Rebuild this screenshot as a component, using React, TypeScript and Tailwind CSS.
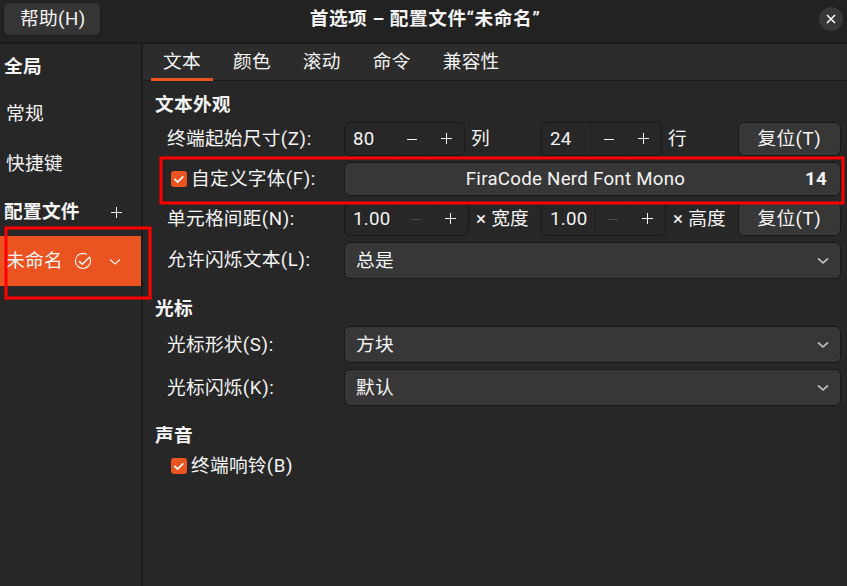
import type { ReactNode } from 'react';

const tabs = ['文本', '颜色', '滚动', '命令', '兼容性'];

function Chevron({ className }: { className: string }) {
  return (
    <svg className={className} width="12" height="8" viewBox="0 0 12 8" fill="none" stroke="currentColor">
      <path d="M1 1.5 L6 5.9 L11 1.5" />
    </svg>
  );
}

function Plus() {
  return (
    <svg width="12" height="12" viewBox="0 0 12 12" stroke="currentColor" strokeWidth="1" shapeRendering="crispEdges">
      <path d="M0.5 6.5H11.5M6.5 1V12" />
    </svg>
  );
}

function Minus() {
  return (
    <svg width="11" height="12" viewBox="0 0 11 12" stroke="currentColor" strokeWidth="1" shapeRendering="crispEdges">
      <path d="M0.5 6.5H10.5" />
    </svg>
  );
}

function Check() {
  return (
    <span className="flex h-4 w-4 shrink-0 items-center justify-center rounded-[3px] bg-[#e95420]">
      <svg width="16" height="16" viewBox="0 0 16 16" fill="none" stroke="#fff" strokeWidth="1.7">
        <path d="M3.4 7.9 L6.6 11 L12.3 5.3" />
      </svg>
    </span>
  );
}

function Key({ children }: { children: ReactNode }) {
  return <span className="tracking-[0.6px]">{children}</span>;
}

function Spin({ value, wide, atMin }: { value: string; wide?: boolean; atMin?: boolean }) {
  return (
    <div className={`flex h-[34px] shrink-0 rounded-[6px] border border-[#191919] bg-[#272727] ${wide ? 'w-[125px]' : 'w-[121px]'}`}>
      <span className="flex flex-1 items-center pl-2">{value}</span>
      <span className={`flex w-[35px] items-center justify-center border-l border-[#222] pr-0.5 ${atMin ? 'text-[#4b4b4b]' : ''}`}><Minus /></span>
      <span className="flex w-[35px] items-center justify-center border-l border-[#222] pb-0.5 pr-0.5"><Plus /></span>
    </div>
  );
}

function Reset() {
  return (
    <button className="ml-auto flex h-[34px] w-[103px] items-center justify-center rounded-[6px] border border-[#191919] bg-[#373737]">
      <span>复位<Key>(T)</Key></span>
    </button>
  );
}

function Combo({ children }: { children: ReactNode }) {
  return (
    <div className="flex h-[37px] flex-1 items-center justify-between rounded-[6px] border border-[#191919] bg-[#373737] pl-[11px] pr-[11px]">
      <span className="pt-px">{children}</span>
      <Chevron className="mt-px text-[#b8b8b8] [stroke-width:1.8]" />
    </div>
  );
}

function Row({ label, children, className }: { label: ReactNode; children?: ReactNode; className: string }) {
  return (
    <div className={`flex items-center pr-[6px] ${className}`}>
      <div className="flex w-[201px] shrink-0 items-center pl-6">{label}</div>
      {children}
    </div>
  );
}

export default function App() {
  return (
    <div className="relative flex h-[586px] w-[847px] flex-col overflow-hidden whitespace-nowrap bg-[#272727] font-['Roboto','Noto_Sans_CJK_SC',sans-serif] text-[18.7px] leading-none tracking-[0.27px] text-[#f4f4f4]">
      <header className="grid h-11 shrink-0 grid-cols-[1fr_auto_1fr] items-start border-b-2 border-[#1b1b1b] bg-[#222]">
        <button className="ml-[3px] mt-[2px] flex h-[34px] w-[98px] items-center justify-center rounded-[6px] border border-[#1b1b1b] bg-[#353535]">
          <span className="pl-0.5">帮助<Key>(H)</Key></span>
        </button>
        <h1 className="mt-[10px] pl-[3px] font-bold tracking-[0.5px]">首选项 – 配置文件“未命名”</h1>
        <button className="mr-[4px] mt-[7px] flex h-6 w-6 items-center justify-center justify-self-end rounded-full bg-[#373737]">
          <svg width="10" height="10" viewBox="0 0 10 10" stroke="#fff" strokeWidth="1.6">
            <path d="M1 1L9 9M9 1L1 9" />
          </svg>
        </button>
      </header>
      <div className="flex flex-1">
        <aside className="w-[143px] shrink-0 border-r-2 border-[#1b1b1b]">
          <h2 className="flex h-11 items-center pl-1 pt-0.5 font-bold">全局</h2>
          <div className="flex h-[50px] items-center pl-[6px] pt-[3px]">常规</div>
          <div className="flex h-[50px] items-center pl-[6px] pt-[3px]">快捷键</div>
          <div className="flex h-12 items-center justify-between pl-1 pr-[19px]">
            <h2 className="pt-px font-bold">配置文件</h2>
            <Plus />
          </div>
          <div className="flex h-[50px] items-center bg-[#e95420] pl-[6px]">
            <span>未命名</span>
            <svg className="ml-[11px]" width="18" height="18" viewBox="0 0 18 18" fill="none" stroke="currentColor" strokeWidth="1.1">
              <path d="M15.4 5.1 A7.5 7.5 0 1 1 12.8 2.5" />
              <path d="M5 9.1 L8.3 12.2 L15.8 4.7" strokeWidth="1.5" />
            </svg>
            <Chevron className="ml-[17px] mt-px [stroke-width:1.2]" />
          </div>
        </aside>
        <main className="flex-1">
          <nav className="flex h-[37px] items-stretch gap-2 border-b border-[#191919] bg-[#2c2c2c] pl-2">
            {tabs.map((tab, i) => (
              <span key={tab} className={`flex items-center px-3 ${i === 0 ? '-mb-px border-b-[3px] border-[#e95420] pt-0.5' : ''}`}>
                {tab}
              </span>
            ))}
          </nav>
          <h2 className="flex h-[41px] items-center pl-3 pt-[7px] font-bold">文本外观</h2>
          <Row className="h-[34px]" label={<>终端起始尺寸<Key>(Z):</Key></>}>
            <Spin value="80" />
            <span className="ml-[6px] w-[70px]">列</span>
            <Spin value="24" />
            <span className="ml-[6px]">行</span>
            <Reset />
          </Row>
          <Row className="mt-[6px] h-[34px]" label={<span className="flex items-center pl-1"><Check /><span className="ml-1">自定义字体</span><Key>(F):</Key></span>}>
            <div className="flex h-[34px] flex-1 items-center rounded-[6px] border border-[#191919] bg-[#373737] pr-[13px]">
              <span className="flex-1 pl-px text-center">FiraCode Nerd Font Mono</span>
              <span className="font-bold">14</span>
            </div>
          </Row>
          <Row className="mt-[6px] h-[34px]" label={<>单元格间距<Key>(N):</Key></>}>
            <Spin value="1.00" wide atMin />
            <span className="ml-[7px] w-[65px]">× 宽度</span>
            <Spin value="1.00" wide atMin />
            <span className="ml-[7px]">× 高度</span>
            <Reset />
          </Row>
          <Row className="mt-[6px] h-[37px]" label={<>允许闪烁文本<Key>(L):</Key></>}><Combo>总是</Combo></Row>
          <h2 className="flex h-[47px] items-center pl-3 pt-[13px] font-bold">光标</h2>
          <Row className="h-[37px]" label={<span className="pt-px">光标形状<Key>(S):</Key></span>}><Combo>方块</Combo></Row>
          <Row className="mt-[6px] h-[37px]" label={<span className="pt-px">光标闪烁<Key>(K):</Key></span>}><Combo>默认</Combo></Row>
          <h2 className="flex h-[48px] items-center pl-3 pt-[12px] font-bold">声音</h2>
          <div className="flex h-6 items-center pl-7"><Check /><span className="ml-1 pt-px">终端响铃<Key>(B)</Key></span></div>
        </main>
      </div>
      <div className="pointer-events-none absolute left-[160px] top-[157px] h-[47px] w-[684px] border-2 border-[#ff0000] shadow-[0_0_0_1px_rgba(255,0,0,0.5),inset_0_0_0_1px_rgba(255,0,0,0.5)]" />
      <div className="pointer-events-none absolute left-[5px] top-[227px] h-[72px] w-[146px] border-2 border-[#ff0000] shadow-[0_0_0_1px_rgba(255,0,0,0.5),inset_0_0_0_1px_rgba(255,0,0,0.5)]" />
    </div>
  );
}
